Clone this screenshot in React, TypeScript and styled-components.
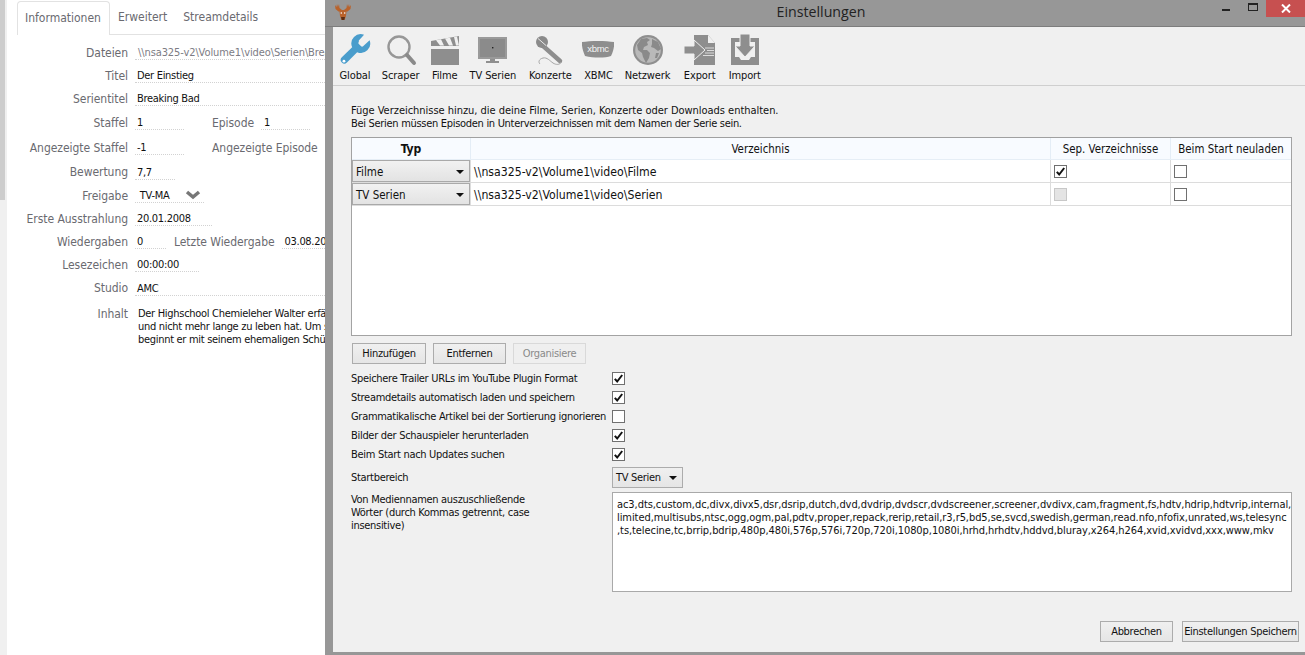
import React from "react";
import styled, { createGlobalStyle } from "styled-components";

const FONT = `"DejaVu Sans Condensed", "DejaVu Sans", sans-serif`;

const GlobalStyle = createGlobalStyle`
  html, body {
    margin: 0;
    height: 100%;
    overflow: hidden;
    background: #fff;
    font-family: ${FONT};
    font-size: 11px;
    letter-spacing: -0.3px;
    color: #111;
  }
  * { box-sizing: border-box; }
`;

const WORDS = [
  "ac3,dts,custom,dc,divx,divx5,dsr,dsrip,dutch,dvd,dvdrip,dvdscr,dvdscreener,screener,dvdivx,cam,fragment,fs,hdtv,hdrip,hdtvrip,internal,",
  "limited,multisubs,ntsc,ogg,ogm,pal,pdtv,proper,repack,rerip,retail,r3,r5,bd5,se,svcd,swedish,german,read.nfo,nfofix,unrated,ws,telesync",
  ",ts,telecine,tc,brrip,bdrip,480p,480i,576p,576i,720p,720i,1080p,1080i,hrhd,hrhdtv,hddvd,bluray,x264,h264,xvid,xvidvd,xxx,www,mkv",
];

const OPTIONS = [
  { label: "Speichere Trailer URLs im YouTube Plugin Format", checked: true },
  { label: "Streamdetails automatisch laden und speichern", checked: true },
  { label: "Grammatikalische Artikel bei der Sortierung ignorieren", checked: false },
  { label: "Bilder der Schauspieler herunterladen", checked: true },
  { label: "Beim Start nach Updates suchen", checked: true },
];

const GRAY = "#8e8e8e";

const GlobalIcon = () => (
  <svg width="34" height="34" viewBox="0 0 24 24">
    <path
      fill="#4a9dcc"
      d="M14.7 6.3a1 1 0 0 0 0 1.4l1.6 1.6a1 1 0 0 0 1.4 0l4.6-4.2a6.6 6.6 0 0 1-8.8 8.4l-7.2 7.3a2.5 2.5 0 0 1-3.6-3.6l7.3-7.2a6.6 6.6 0 0 1 8.4-8.8l-3.7 4.1z"
    />
    <circle cx="4.2" cy="19.9" r="1" fill="#fff" />
  </svg>
);

const ScraperIcon = () => (
  <svg width="32" height="32" viewBox="0 0 32 32">
    <circle cx="14" cy="13" r="10.5" fill="none" stroke="#979797" strokeWidth="2.4" />
    <path d="M22 21l7 8" stroke="#8a8a8a" strokeWidth="4" strokeLinecap="round" />
  </svg>
);

const FilmeIcon = () => (
  <svg width="30" height="32" viewBox="0 0 30 32">
    <path fill={GRAY} d="M1 15h28v16H1z" />
    <path fill={GRAY} d="M1 7l28-5v10H1z" />
    <path fill="#f0f0f0" d="M6 6.2l5-.9 3 6.2h-4zM15 4.6l5-.9 3 7.800h-4zM24 3l3-.5 2 9h-3z" />
  </svg>
);

const TvIcon = () => (
  <svg width="32" height="32" viewBox="0 0 32 32">
    <rect x="1" y="3" width="29" height="22" fill="#9a9a9a" />
    <rect x="3" y="5" width="25" height="18" fill="#8b8b8b" />
    <rect x="15" y="13" width="1.4" height="1.4" fill="#222" />
    <path fill="#8f8f8f" d="M13 25h5v2h4v2H9v-2h4z" />
  </svg>
);

const KonzerteIcon = () => (
  <svg width="32" height="32" viewBox="0 0 32 32">
    <path d="M8 11l18 16" stroke={GRAY} strokeWidth="4.5" strokeLinecap="round" />
    <circle cx="8" cy="8" r="6" fill="#8a8a8a" />
    <path d="M4 4.500l8 7" stroke="#e8e8e8" strokeWidth="1" />
    <path
      d="M27 28c-1 3-5 3-8 1s-6-6-10-5-5 4-3 6"
      fill="none"
      stroke="#a5a5a5"
      strokeWidth="1"
    />
  </svg>
);

const XbmcIcon = () => (
  <svg width="32" height="32" viewBox="0 0 32 32">
    <path fill={GRAY} d="M0 8c8-1.500 24-1.500 32 0 .5 4-.5 9-3 14-6 2-17 2-26 0-2-5-3.500-10-3-14z" />
    <text x="16" y="18" textAnchor="middle" fontSize="9.500" fontFamily="Liberation Sans" fill="#f4f4f4">
      xbmc
    </text>
  </svg>
);

const NetzwerkIcon = () => (
  <svg width="32" height="32" viewBox="0 0 32 32">
    <circle cx="16" cy="16" r="15" fill="#8f8f8f" />
    <circle cx="16" cy="16" r="12.800" fill="#b9b9b9" />
    <path
      fill="#8a8a8a"
      d="M9 5l6-1 3 2-3 2 1 3-4 2-1 3 4 0 3 3-1 5-3 5-3-6-1-4-4-3-1-5zM20 5l6 3 3 7-3 2-4-3-3-1 1-3zM24 19l3 0-2 5-2 0z"
    />
  </svg>
);

const ExportIcon = () => (
  <svg width="34" height="32" viewBox="0 0 34 32">
    <path fill={GRAY} d="M11 1h14l7 8v22H11z" />
    <path fill="#f0f0f0" d="M25 1l7 8h-7z" />
    <path fill={GRAY} stroke="#f0f0f0" strokeWidth="1" d="M1 12h10V6l11 10-11 10v-6H1z" />
    <path d="M22 14h9M24 16.500h7M22 19h9M20 21.500h11" stroke="#f0f0f0" strokeWidth="0.8" />
  </svg>
);

const ImportIcon = () => (
  <svg width="30" height="32" viewBox="0 0 30 32">
    <path fill={GRAY} d="M1 4h28v27H1z" />
    <path fill="#f0f0f0" d="M5 8h20v15h-4l-2 3h-8l-2-3H5z" />
    <path fill={GRAY} stroke="#f0f0f0" strokeWidth="1" d="M10 0h10v12h5L15 23 5 12h5z" />
  </svg>
);

const TOOLS = [
  { label: "Global", width: 28, icon: <GlobalIcon /> },
  { label: "Scraper", width: 38, icon: <ScraperIcon /> },
  { label: "Filme", width: 25, icon: <FilmeIcon /> },
  { label: "TV Serien", width: 46, icon: <TvIcon /> },
  { label: "Konzerte", width: 44, icon: <KonzerteIcon /> },
  { label: "XBMC", width: 27, icon: <XbmcIcon /> },
  { label: "Netzwerk", width: 46, icon: <NetzwerkIcon /> },
  { label: "Export", width: 33, icon: <ExportIcon /> },
  { label: "Import", width: 32, icon: <ImportIcon /> },
];

const MooseLogo = () => (
  <svg width="18" height="18" viewBox="0 0 18 18">
    <path
      fill="#b9622b"
      d="M1 2l1.500 2L3 1l1 3 1-3 .5 4L8 7h2l2.500-2L13 1l1 3 1-3 .5 3L17 2l-.5 4-3 2.500h-1L12 13l-1.500 4h-3L6 13l-.5-4.500h-1L1.500 6z"
    />
    <circle cx="7.300" cy="10" r=".8" fill="#fff" />
    <circle cx="10.700" cy="10" r=".8" fill="#fff" />
    <path fill="#5a2c12" d="M7 14h4l-.7 3H7.700z" />
  </svg>
);

const CheckMark = () => (
  <svg width="11" height="11" viewBox="0 0 11 11">
    <path d="M1.800 5.800l2.400 2.700 5-6.500" fill="none" stroke="#111" strokeWidth="2" />
  </svg>
);

const Desktop = styled.div`
  display: flex;
  width: 1305px;
  height: 655px;
  overflow: hidden;
`;

/* main window behind the dialog */
const Behind = styled.div`
  display: flex;
  flex: 0 0 325px;
  overflow: hidden;
  background: #fff;
`;

const ScrollTrack = styled.div`
  flex: 0 0 7px;
  background: #f0f0f0;
`;

const ScrollThumb = styled.div`
  width: 5px;
  height: 200px;
  background: #cdcdcd;
`;

const EpisodePane = styled.div`
  flex: 1;
  min-width: 0;
  padding-left: 10px;
`;

const TabBar = styled.div`
  display: flex;
  align-items: flex-end;
  height: 35px;
  padding-top: 1px;
  border-bottom: 1px solid #e2e2e2;
  white-space: nowrap;
`;

const Tab = styled.div<{ $active?: boolean }>`
  height: ${(p) => (p.$active ? "34px" : "33px")};
  margin-bottom: ${(p) => (p.$active ? "-1px" : "0")};
  padding: 0 8px 0 ${(p) => (p.$active ? "7px" : "8px")};
  line-height: 32px;
  font-size: 12px;
  letter-spacing: 0;
  color: #6a6a70;
  background: #fff;
  border: ${(p) => (p.$active ? "1px solid #e2e2e2" : "none")};
  border-bottom: none;
  border-radius: 4px 4px 0 0;
`;

const Form = styled.div`
  padding-top: 6px;
  margin-left: -17px;
  width: 325px;
`;

const Row = styled.div<{ $h: number }>`
  display: flex;
  align-items: center;
  height: ${(p) => p.$h}px;
  white-space: nowrap;
`;

const Label = styled.div`
  flex: 0 0 128px;
  text-align: right;
  font-size: 12px;
  letter-spacing: -0.05px;
  color: #6a6a70;
`;

const SideLabel = styled.div<{ $gap: number }>`
  margin-left: ${(p) => p.$gap}px;
  font-size: 12px;
  letter-spacing: -0.05px;
  color: #6a6a70;
`;

const Field = styled.div<{ $w?: number; $muted?: boolean; $inset?: number }>`
  flex: ${(p) => (p.$w ? `0 0 ${p.$w}px` : "1")};
  min-width: 0;
  overflow: hidden;
  margin-left: 7px;
  padding-left: ${(p) => p.$inset ?? 2}px;
  height: 15px;
  line-height: 15px;
  font-size: 11px;
  letter-spacing: ${(p) => (p.$muted ? "-0.1px" : "-0.3px")};
  color: ${(p) => (p.$muted ? "#7c7c84" : "#111")};
  border-bottom: 1px dotted #d2d2d2;
`;

const ChevronWrap = styled.span`
  display: inline-block;
  margin-left: 16px;
  vertical-align: -1px;
`;

const SummaryRow = styled.div`
  display: flex;
  padding-top: 7px;
  white-space: nowrap;
`;

const SummaryLabel = styled(Label)`
  line-height: 15px;
`;

const SummaryText = styled.div`
  margin-left: 10px;
  line-height: 13px;
  font-size: 11px;
  overflow: hidden;
`;

/* settings dialog */
const Dialog = styled.div`
  flex: 1;
  display: flex;
  flex-direction: column;
  background: #979797;
  padding: 0 0 3px 8px;
`;

const TitleBar = styled.div`
  position: relative;
  flex: 0 0 27px;
  margin-left: -8px;
  border-bottom: 1px solid #7d7d7d;
`;

const TitleLogo = styled.div`
  position: absolute;
  left: 9px;
  top: 3px;
`;

const TitleText = styled.div`
  text-align: center;
  padding-left: 12px;
  line-height: 24px;
  font-family: "Open Sans", sans-serif;
  font-size: 14.2px;
  letter-spacing: 0;
  color: #222;
`;

const WindowButtons = styled.div`
  position: absolute;
  right: 0;
  top: 0;
  display: flex;
`;

const MinButton = styled.div`
  width: 8px;
  height: 2px;
  margin-top: 9px;
  background: #222;
`;

const MaxButton = styled.div`
  width: 10px;
  height: 8px;
  margin: 3px 8px 0 18px;
  border: 1px solid #222;
  border-top-width: 2px;
`;

const CloseButton = styled.div`
  width: 39px;
  height: 17px;
  background: #c75050;
  display: flex;
  align-items: center;
  justify-content: center;
`;

const DialogBody = styled.div`
  flex: 1;
  display: flex;
  flex-direction: column;
  min-height: 0;
  background: #f0f0f0;
`;

const Toolbar = styled.div`
  display: flex;
  flex: 0 0 59px;
  gap: 12.6px;
  padding: 6px 0 0 8px;
  border-bottom: 1px solid #cfcfcf;
`;

const ToolItem = styled.div<{ $w: number }>`
  display: flex;
  flex: 0 0 ${(p) => p.$w}px;
  min-width: 0;
  flex-direction: column;
  align-items: center;
  white-space: nowrap;
`;

const ToolIcon = styled.div`
  display: flex;
  align-items: center;
  justify-content: center;
  height: 34px;
`;

const ToolLabel = styled.div`
  margin-top: 2px;
  line-height: 14px;
  font-size: 11px;
  letter-spacing: -0.1px;
`;

const Content = styled.div`
  flex: 1;
  display: flex;
  flex-direction: column;
  padding: 18px 6px 0 18px;
`;

const Intro = styled.div`
  line-height: 13px;
  margin-bottom: 7px;
`;

const IntroLine = styled.div<{ $spacing: number }>`
  letter-spacing: ${(p) => p.$spacing}px;
  white-space: nowrap;
`;

const PathTable = styled.div`
  width: 941px;
  height: 199px;
  background: #fff;
  border: 1px solid #a3a3a3;
  border-top-color: #a0a0a0;
`;

const TableRow = styled.div<{ $head?: boolean }>`
  display: grid;
  grid-template-columns: 119px 580px 120px 120px;
  height: ${(p) => (p.$head ? "22px" : "23px")};
  background: ${(p) => (p.$head ? "#f8fbff" : "#fff")};
  border-bottom: 1px solid ${(p) => (p.$head ? "#e6eef6" : "#dcdcdc")};
`;

const HeadCell = styled.div<{ $bold?: boolean }>`
  display: flex;
  align-items: center;
  justify-content: center;
  font-weight: ${(p) => (p.$bold ? 700 : 400)};
  font-size: ${(p) => (p.$bold ? "12px" : "11.4px")};
  letter-spacing: 0;
  border-right: 1px solid #e4edf6;
  &:last-child { border-right: none; }
`;

const Cell = styled.div`
  display: flex;
  align-items: center;
  padding: 1px 0 0 3px;
  font-size: 12.2px;
  letter-spacing: 0;
  border-right: 1px solid #dcdcdc;
  &:last-child { border-right: none; }
`;

const ComboCell = styled.div`
  padding: 0;
  border-right: 1px solid #dcdcdc;
`;

const TableCombo = styled.div`
  display: flex;
  align-items: center;
  justify-content: space-between;
  height: 22px;
  padding: 1px 3px 0 3px;
  font-size: 11.5px;
  letter-spacing: 0;
  background: linear-gradient(#f1f1f1, #e3e3e3);
  border: 1px solid #a9a9a9;
  border-width: 1.500px;
`;

const Arrow = styled.span`
  width: 0;
  height: 0;
  border-left: 4px solid transparent;
  border-right: 4px solid transparent;
  border-top: 4px solid #111;
  margin-right: 2px;
`;

const Box = styled.span<{ $disabled?: boolean }>`
  display: flex;
  align-items: center;
  justify-content: center;
  width: 13px;
  height: 13px;
  flex: none;
  background: ${(p) => (p.$disabled ? "#e4e4e4" : "#fff")};
  border: 1px solid ${(p) => (p.$disabled ? "#c8c8c8" : "#707070")};
`;

const BoxCell = styled(Cell)`
  padding: 0 0 0 3px;
`;

const ButtonRow = styled.div`
  display: flex;
  gap: 7px;
  margin: 7px 0 5px 1px;
`;

const Button = styled.div<{ $w: number; $disabled?: boolean }>`
  width: ${(p) => p.$w}px;
  height: 21px;
  display: flex;
  align-items: center;
  justify-content: center;
  white-space: nowrap;
  font-size: 11px;
  color: ${(p) => (p.$disabled ? "#8a8a8a" : "#111")};
  background: ${(p) => (p.$disabled ? "#efefef" : "linear-gradient(#f0f0f0, #e5e5e5)")};
  border: 1px solid ${(p) => (p.$disabled ? "#d9d9d9" : "#acacac")};
`;

const OptionRow = styled.div`
  display: flex;
  align-items: center;
  height: 19px;
`;

const OptionLabel = styled.div`
  flex: 0 0 261px;
  white-space: nowrap;
`;

const StartRow = styled.div`
  display: flex;
  align-items: center;
  margin-top: 3px;
  height: 21px;
`;

const StartCombo = styled.div`
  display: flex;
  align-items: center;
  justify-content: space-between;
  width: 71px;
  height: 21px;
  padding: 0 3px;
  font-size: 11px;
  background: linear-gradient(#f0f0f0, #e5e5e5);
  border: 1px solid #acacac;
`;

const ExcludeRow = styled.div`
  display: flex;
  margin-top: 4px;
`;

const ExcludeLabel = styled.div`
  flex: 0 0 261px;
  padding: 1px 60px 0 0;
  line-height: 13px;
`;

const WordBox = styled.div`
  width: 680px;
  height: 100px;
  padding: 5px 4px;
  background: #fff;
  border: 1px solid #a9a9a9;
  line-height: 13px;
  letter-spacing: -0.07px;
  white-space: nowrap;
  overflow: hidden;
`;

const Footer = styled.div`
  display: flex;
  justify-content: flex-end;
  gap: 9px;
  margin-top: 29px;
`;

export default function App() {
  return (
    <Desktop>
      <GlobalStyle />
      <Behind>
        <ScrollTrack>
          <ScrollThumb />
        </ScrollTrack>
        <EpisodePane>
          <TabBar>
            <Tab $active>Informationen</Tab>
            <Tab>Erweitert</Tab>
            <Tab>Streamdetails</Tab>
          </TabBar>
          <Form>
            <Row $h={23}>
              <Label>Dateien</Label>
              <Field $muted $inset={3}>
                \\nsa325-v2\Volume1\video\Serien\Breaking Bad\Season 1\Breaking.Bad.S01E01.mkv
              </Field>
            </Row>
            <Row $h={23}>
              <Label>Titel</Label>
              <Field>Der Einstieg</Field>
            </Row>
            <Row $h={23}>
              <Label>Serientitel</Label>
              <Field>Breaking Bad</Field>
            </Row>
            <Row $h={25}>
              <Label>Staffel</Label>
              <Field $w={49}>1</Field>
              <SideLabel $gap={28}>Episode</SideLabel>
              <Field $w={49} $inset={3}>
                1
              </Field>
            </Row>
            <Row $h={25}>
              <Label>Angezeigte Staffel</Label>
              <Field $w={49}>-1</Field>
              <SideLabel $gap={28}>Angezeigte Episode</SideLabel>
            </Row>
            <Row $h={24}>
              <Label>Bewertung</Label>
              <Field $w={40}>7,7</Field>
            </Row>
            <Row $h={23}>
              <Label>Freigabe</Label>
              <Field $w={69}>
                &nbsp;TV-MA
                <ChevronWrap>
                  <svg width="16" height="10" viewBox="0 0 16 10">
                    <path d="M2 2l6 5 6-5" fill="none" stroke="#777" strokeWidth="3.500" />
                  </svg>
                </ChevronWrap>
              </Field>
            </Row>
            <Row $h={23}>
              <Label>Erste Ausstrahlung</Label>
              <Field $w={77}>20.01.2008</Field>
            </Row>
            <Row $h={23}>
              <Label>Wiedergaben</Label>
              <Field $w={31}>0</Field>
              <SideLabel $gap={8}>Letzte Wiedergabe</SideLabel>
              <Field $inset={3}>03.08.2014</Field>
            </Row>
            <Row $h={23}>
              <Label>Lesezeichen</Label>
              <Field $w={64}>00:00:00</Field>
            </Row>
            <Row $h={24}>
              <Label>Studio</Label>
              <Field>AMC</Field>
            </Row>
            <SummaryRow>
              <SummaryLabel>Inhalt</SummaryLabel>
              <SummaryText>
                Der Highschool Chemieleher Walter erfährt, dass er Krebs hat
                <br />
                und nicht mehr lange zu leben hat. Um seine Familie abzusichern,
                <br />
                beginnt er mit seinem ehemaligen Schüler Jesse Crystal Meth zu kochen.
              </SummaryText>
            </SummaryRow>
          </Form>
        </EpisodePane>
      </Behind>

      <Dialog>
        <TitleBar>
          <TitleLogo>
            <MooseLogo />
          </TitleLogo>
          <TitleText>Einstellungen</TitleText>
          <WindowButtons>
            <MinButton />
            <MaxButton />
            <CloseButton>
              <svg width="10" height="9" viewBox="0 0 10 9">
                <path d="M1 .5l8 8M9 .5l-8 8" stroke="#fff" strokeWidth="2" />
              </svg>
            </CloseButton>
          </WindowButtons>
        </TitleBar>

        <DialogBody>
          <Toolbar>
            {TOOLS.map((t) => (
              <ToolItem key={t.label} $w={t.width}>
                <ToolIcon>{t.icon}</ToolIcon>
                <ToolLabel>{t.label}</ToolLabel>
              </ToolItem>
            ))}
          </Toolbar>

          <Content>
            <Intro>
              <IntroLine $spacing={-0.03}>
                Füge Verzeichnisse hinzu, die deine Filme, Serien, Konzerte oder Downloads enthalten.
              </IntroLine>
              <IntroLine $spacing={-0.3}>
                Bei Serien müssen Episoden in Unterverzeichnissen mit dem Namen der Serie sein.
              </IntroLine>
            </Intro>

            <PathTable>
              <TableRow $head>
                <HeadCell $bold>Typ</HeadCell>
                <HeadCell>Verzeichnis</HeadCell>
                <HeadCell>Sep. Verzeichnisse</HeadCell>
                <HeadCell>Beim Start neuladen</HeadCell>
              </TableRow>
              <TableRow>
                <ComboCell>
                  <TableCombo>
                    Filme
                    <Arrow />
                  </TableCombo>
                </ComboCell>
                <Cell>\\nsa325-v2\Volume1\video\Filme</Cell>
                <BoxCell>
                  <Box>
                    <CheckMark />
                  </Box>
                </BoxCell>
                <BoxCell>
                  <Box />
                </BoxCell>
              </TableRow>
              <TableRow>
                <ComboCell>
                  <TableCombo>
                    TV Serien
                    <Arrow />
                  </TableCombo>
                </ComboCell>
                <Cell>\\nsa325-v2\Volume1\video\Serien</Cell>
                <BoxCell>
                  <Box $disabled />
                </BoxCell>
                <BoxCell>
                  <Box />
                </BoxCell>
              </TableRow>
            </PathTable>

            <ButtonRow>
              <Button $w={74}>Hinzufügen</Button>
              <Button $w={73}>Entfernen</Button>
              <Button $w={73} $disabled>
                Organisiere
              </Button>
            </ButtonRow>

            {OPTIONS.map((o) => (
              <OptionRow key={o.label}>
                <OptionLabel>{o.label}</OptionLabel>
                <Box>{o.checked && <CheckMark />}</Box>
              </OptionRow>
            ))}

            <StartRow>
              <OptionLabel>Startbereich</OptionLabel>
              <StartCombo>
                TV Serien
                <Arrow />
              </StartCombo>
            </StartRow>

            <ExcludeRow>
              <ExcludeLabel>Von Mediennamen auszuschließende Wörter (durch Kommas getrennt, case insensitive)</ExcludeLabel>
              <WordBox>
                {WORDS.map((line) => (
                  <div key={line}>{line}</div>
                ))}
              </WordBox>
            </ExcludeRow>

            <Footer>
              <Button $w={73}>Abbrechen</Button>
              <Button $w={117}>Einstellungen Speichern</Button>
            </Footer>
          </Content>
        </DialogBody>
      </Dialog>
    </Desktop>
  );
}
